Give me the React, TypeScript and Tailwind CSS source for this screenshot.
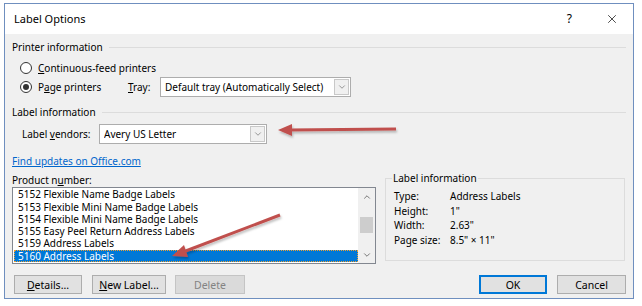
import { X, ChevronDown, ChevronUp } from "lucide-react";

const font = { fontFamily: '"Noto Sans", "Open Sans", sans-serif' };

function SectionHeader({ title }: { title: string }) {
  return (
    <div className="flex h-[14px] items-center gap-[6px]">
      <span>{title}</span>
      <div className="h-px flex-1 bg-[#dcdcdc]" />
    </div>
  );
}

function Radio({ checked }: { checked?: boolean }) {
  return (
    <span className="flex h-[12px] w-[12px] items-center justify-center rounded-full border border-[#333] bg-white">
      {checked && <span className="h-[6px] w-[6px] rounded-full bg-[#333]" />}
    </span>
  );
}

function Select({ value, className }: { value: string; className: string }) {
  return (
    <div className={`flex h-[20px] items-center border border-[#adadad] bg-white pl-[4px] ${className}`}>
      <span className="flex-1 truncate">{value}</span>
      <span className="mr-px flex h-[16px] w-[15px] items-center justify-center border border-[#c8c8c8] bg-[#f0f0f0] text-[#606060]">
        <ChevronDown size={10} strokeWidth={1.5} />
      </span>
    </div>
  );
}

function Btn({ children, className = "" }: { children: React.ReactNode; className?: string }) {
  return (
    <button className={`flex h-[19px] items-center justify-center border text-[10.5px] ${className}`}>{children}</button>
  );
}

const products = [
  "5152 Flexible Name Badge Labels",
  "5153 Flexible Mini Name Badge Labels",
  "5154 Flexible Mini Name Badge Labels",
  "5155 Easy Peel Return Address Labels",
  "5159 Address Labels",
  "5160 Address Labels",
];

const info = [
  ["Type:", "Address Labels"],
  ["Height:", "1\""],
  ["Width:", "2.63\""],
  ["Page size:", "8.5\" × 11\""],
];

export default function App() {
  return (
    <div className="h-[306px] w-[642px] bg-white pt-[3px] pl-[4px] text-[10px] leading-[14px] text-black" style={font}>
      <div className="relative flex h-[296px] w-[630px] flex-col border border-[#6f8fbf]">
        {/* Title bar */}
        <div className="flex h-[30px] items-center bg-white pl-[9px] text-[11px]">
          <span className="flex-1">Label Options</span>
          <span className="mr-[33px] text-[12px]">?</span>
          <X size={14} strokeWidth={1.2} className="mr-[14px]" />
        </div>

        {/* Body */}
        <div className="flex flex-1 flex-col bg-[#f0f0f0] px-[7px] pt-[6px]">
          <SectionHeader title="Printer information" />
          <div className="mt-[7px] flex h-[14px] items-center gap-[6px] pl-[8px]">
            <Radio />
            <span>
              <u>C</u>ontinuous-feed printers
            </span>
          </div>
          <div className="mt-[2px] flex h-[20px] items-center pl-[8px]">
            <Radio checked />
            <span className="ml-[6px] w-[90px]">
              P<u>a</u>ge printers
            </span>
            <span className="w-[32px]">
              <u>T</u>ray:
            </span>
            <Select value="Default tray (Automatically Select)" className="w-[191px]" />
          </div>

          <div className="mt-[8px]">
            <SectionHeader title="Label information" />
          </div>
          <div className="mt-[5px] flex h-[20px] items-center pl-[10px]">
            <span className="w-[77px]">
              Label <u>v</u>endors:
            </span>
            <Select value="Avery US Letter" className="w-[168px]" />
          </div>

          <div className="mt-[10px] h-[14px]">
            <span className="text-[#0066cc] underline">Find updates on Office.com</span>
          </div>
          <div className="mt-[5px] h-[14px]">
            Product n<u>u</u>mber:
          </div>

          <div className="flex items-start gap-[9px]">
            {/* Product list */}
            <div className="flex h-[77px] w-[364px] border border-[#828790] bg-white">
              <div className="flex flex-1 flex-col justify-end pb-[1px] pl-[1px]">
                {products.map((p, i) =>
                  i === products.length - 1 ? (
                    <div
                      key={p}
                      className="h-[12.3px] border border-dotted border-[#f0a030] bg-[#0078d7] pl-[3px] leading-[10.3px] text-white"
                    >
                      {p}
                    </div>
                  ) : (
                    <div key={p} className="h-[12.3px] pl-[4px] leading-[12.3px]">
                      {p}
                    </div>
                  )
                )}
              </div>
              <div className="flex w-[17px] flex-col items-center bg-[#f0f0f0] text-[#606060]">
                <ChevronUp size={10} strokeWidth={2} className="mt-[4px]" />
                <div className="mt-[15px] h-[16px] w-[13px] bg-[#cdcdcd]" />
                <div className="flex-1" />
                <ChevronDown size={10} strokeWidth={2} className="mb-[3px]" />
              </div>
            </div>

            {/* Label information group */}
            <fieldset className="-mt-[16px] h-[90px] w-[240px] border border-[#dcdcdc] pl-[6px] pt-[4px]">
              <legend className="px-px">Label information</legend>
              {info.map(([k, v]) => (
                <div key={k} className="flex h-[14.5px] items-center pl-[2px]">
                  <span className="w-[56px]">{k}</span>
                  <span>{v}</span>
                </div>
              ))}
            </fieldset>
          </div>

          {/* Buttons */}
          <div className="mt-[11px] flex items-center">
            <Btn className="ml-[2px] w-[68px] border-[#adadad] bg-[#e1e1e1]">
              <u>D</u>etails...
            </Btn>
            <Btn className="ml-[10px] w-[74px] border-[#adadad] bg-[#e1e1e1]">
              <u>N</u>ew Label...
            </Btn>
            <Btn className="ml-[9px] w-[70px] border-[#c4c4c4] bg-[#dadada] text-[#838383]">Delete</Btn>
            <div className="flex-1" />
            <Btn className="w-[68px] border-[#0078d7] bg-[#e1e1e1] shadow-[inset_0_0_0_1px_#0078d7]">OK</Btn>
            <Btn className="ml-[10px] w-[69px] border-[#adadad] bg-[#e1e1e1]">Cancel</Btn>
          </div>
        </div>

        {/* Annotation arrows */}
        <svg className="pointer-events-none absolute left-0 top-0" width="630" height="296">
          <defs>
            <filter id="sh" x="-10%" y="-50%" width="120%" height="200%">
              <feDropShadow dx="1" dy="2" stdDeviation="1" floodColor="#000" floodOpacity="0.25" />
            </filter>
          </defs>
          <g filter="url(#sh)" fill="#c0504d" stroke="#c0504d">
            <line x1="391" y1="125" x2="284" y2="126" strokeWidth="3" />
            <polygon points="273,126 287,120 287,132" stroke="none" />
            <line x1="275" y1="211" x2="178" y2="248" strokeWidth="3" />
            <polygon points="167,252 179,241 183,253" stroke="none" />
          </g>
        </svg>
      </div>
    </div>
  );
}
